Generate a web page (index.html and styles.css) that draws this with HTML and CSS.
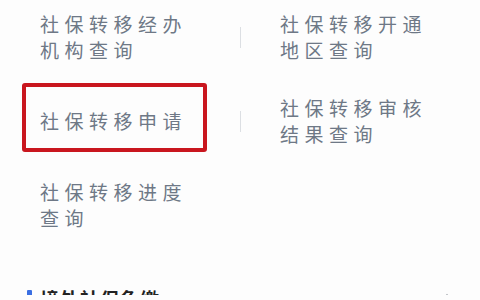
FILE: index.html
```html
<!DOCTYPE html>
<html lang="zh">
<head>
<meta charset="utf-8">
<link rel="stylesheet" href="styles.css">
</head>
<body>
<div class="page">
  <div class="grid">
    <div class="cell"><span class="label">社保转移经办机构查询</span><span class="divider"></span></div>
    <div class="cell"><span class="label">社保转移开通地区查询</span></div>
    <div class="cell highlight"><span class="label">社保转移申请</span><span class="divider"></span></div>
    <div class="cell"><span class="label">社保转移审核结果查询</span></div>
    <div class="cell"><span class="label">社保转移进度查询</span></div>
    <div class="cell"></div>
  </div>
  <div class="section">
    <span class="bar"></span>
    <span class="title">境外社保免缴</span>
    <svg class="chev" width="12" height="8" viewBox="0 0 12 8"><path d="M1.5 6.5 L6 2 L10.5 6.5" fill="none" stroke="#a9adb3" stroke-width="1.6"/></svg>
  </div>
</div>
</body>
</html>
```
FILE: styles.css
```css
html, body {
  margin: 0;
  padding: 0;
  background: #fdfdfd;
  overflow: hidden;
}
.page {
  width: 480px;
  height: 300px;
  margin-top: -5px;
  font-family: "Noto Sans CJK SC", "Noto Sans", sans-serif;
}
.grid {
  display: grid;
  grid-template-columns: 240px 240px;
  grid-auto-rows: 84px;
}
.cell {
  position: relative;
  display: flex;
  align-items: center;
  padding-left: 40px;
}
.label {
  width: 150px;
  font-size: 19px;
  letter-spacing: 5.5px;
  line-height: 26.5px;
  color: #6e7886;
}
.divider {
  position: absolute;
  right: -1px;
  top: 50%;
  width: 1px;
  height: 21px;
  margin-top: -10px;
  background: #dcdfe3;
}
.highlight::after {
  content: "";
  position: absolute;
  left: 22px;
  top: 4px;
  width: 185px;
  height: 69px;
  box-sizing: border-box;
  border: 4px solid #c9161e;
  border-radius: 3px;
}
.section {
  position: relative;
  display: flex;
  align-items: flex-start;
  margin-top: 40px;
  padding-left: 27px;
}
.bar {
  width: 5px;
  height: 20px;
  margin-top: 3px;
  background: #3b6fe2;
  border-radius: 1px;
}
.title {
  margin-left: 8px;
  font-size: 19px;
  font-weight: bold;
  color: #222;
  letter-spacing: 1px;
  line-height: 24px;
}
.chev {
  position: absolute;
  left: 441px;
  top: 6px;
}
```
